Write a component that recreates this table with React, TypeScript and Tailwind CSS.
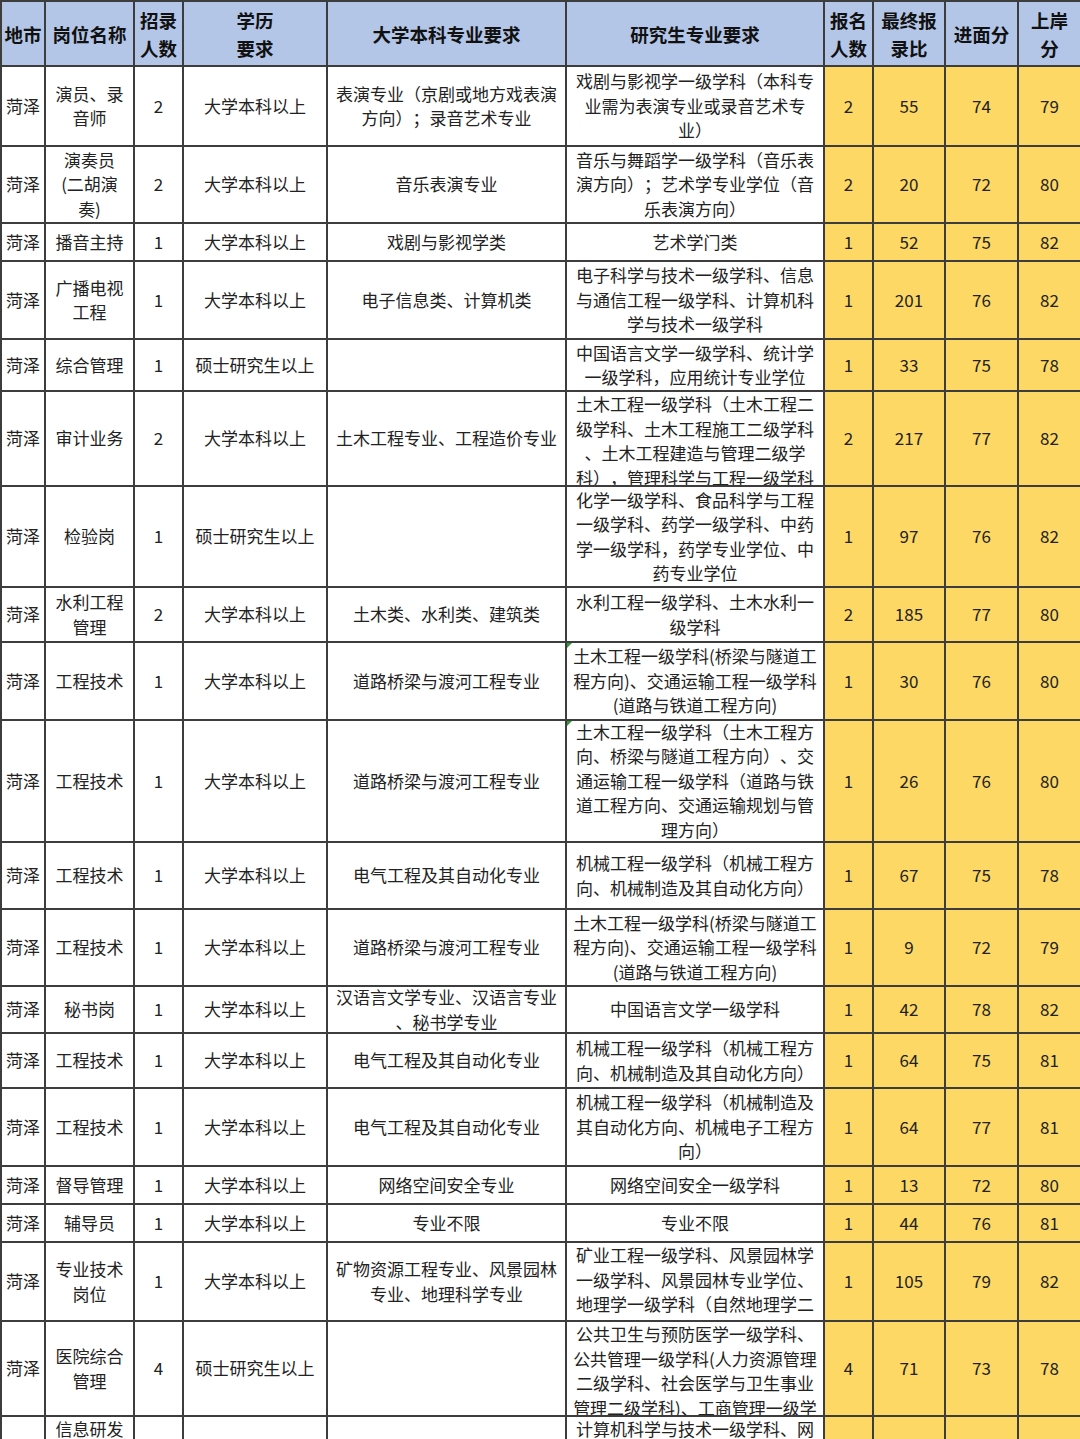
type Row = {
  city: string;
  post: string[];
  num: string;
  edu: string;
  ug: string[];
  pg: string[];
  pgTop?: boolean;
  mark?: boolean;
  stats: string[];
};

const rows: Row[] = [
  {
    city: "菏泽",
    post: ["演员、录", "音师"],
    num: "2",
    edu: "大学本科以上",
    ug: ["表演专业（京剧或地方戏表演", "方向）；录音艺术专业"],
    pg: ["戏剧与影视学一级学科（本科专", "业需为表演专业或录音艺术专", "业）"],
    stats: ["2", "55", "74", "79"],
  },
  {
    city: "菏泽",
    post: ["演奏员", "(二胡演", "奏)"],
    num: "2",
    edu: "大学本科以上",
    ug: ["音乐表演专业"],
    pg: ["音乐与舞蹈学一级学科（音乐表", "演方向）；艺术学专业学位（音", "乐表演方向）"],
    stats: ["2", "20", "72", "80"],
  },
  {
    city: "菏泽",
    post: ["播音主持"],
    num: "1",
    edu: "大学本科以上",
    ug: ["戏剧与影视学类"],
    pg: ["艺术学门类"],
    stats: ["1", "52", "75", "82"],
  },
  {
    city: "菏泽",
    post: ["广播电视", "工程"],
    num: "1",
    edu: "大学本科以上",
    ug: ["电子信息类、计算机类"],
    pg: ["电子科学与技术一级学科、信息", "与通信工程一级学科、计算机科", "学与技术一级学科"],
    stats: ["1", "201", "76", "82"],
  },
  {
    city: "菏泽",
    post: ["综合管理"],
    num: "1",
    edu: "硕士研究生以上",
    ug: [],
    pg: ["中国语言文学一级学科、统计学", "一级学科，应用统计专业学位"],
    stats: ["1", "33", "75", "78"],
  },
  {
    city: "菏泽",
    post: ["审计业务"],
    num: "2",
    edu: "大学本科以上",
    ug: ["土木工程专业、工程造价专业"],
    pg: ["土木工程一级学科（土木工程二", "级学科、土木工程施工二级学科", "、土木工程建造与管理二级学", "科），管理科学与工程一级学科"],
    pgTop: true,
    stats: ["2", "217", "77", "82"],
  },
  {
    city: "菏泽",
    post: ["检验岗"],
    num: "1",
    edu: "硕士研究生以上",
    ug: [],
    pg: ["化学一级学科、食品科学与工程", "一级学科、药学一级学科、中药", "学一级学科，药学专业学位、中", "药专业学位"],
    stats: ["1", "97", "76", "82"],
  },
  {
    city: "菏泽",
    post: ["水利工程", "管理"],
    num: "2",
    edu: "大学本科以上",
    ug: ["土木类、水利类、建筑类"],
    pg: ["水利工程一级学科、土木水利一", "级学科"],
    stats: ["2", "185", "77", "80"],
  },
  {
    city: "菏泽",
    post: ["工程技术"],
    num: "1",
    edu: "大学本科以上",
    ug: ["道路桥梁与渡河工程专业"],
    pg: ["土木工程一级学科(桥梁与隧道工", "程方向)、交通运输工程一级学科", "(道路与铁道工程方向)"],
    mark: true,
    stats: ["1", "30", "76", "80"],
  },
  {
    city: "菏泽",
    post: ["工程技术"],
    num: "1",
    edu: "大学本科以上",
    ug: ["道路桥梁与渡河工程专业"],
    pg: ["土木工程一级学科（土木工程方", "向、桥梁与隧道工程方向）、交", "通运输工程一级学科（道路与铁", "道工程方向、交通运输规划与管", "理方向）"],
    mark: true,
    stats: ["1", "26", "76", "80"],
  },
  {
    city: "菏泽",
    post: ["工程技术"],
    num: "1",
    edu: "大学本科以上",
    ug: ["电气工程及其自动化专业"],
    pg: ["机械工程一级学科（机械工程方", "向、机械制造及其自动化方向）"],
    stats: ["1", "67", "75", "78"],
  },
  {
    city: "菏泽",
    post: ["工程技术"],
    num: "1",
    edu: "大学本科以上",
    ug: ["道路桥梁与渡河工程专业"],
    pg: ["土木工程一级学科(桥梁与隧道工", "程方向)、交通运输工程一级学科", "(道路与铁道工程方向)"],
    stats: ["1", "9", "72", "79"],
  },
  {
    city: "菏泽",
    post: ["秘书岗"],
    num: "1",
    edu: "大学本科以上",
    ug: ["汉语言文学专业、汉语言专业", "、秘书学专业"],
    pg: ["中国语言文学一级学科"],
    stats: ["1", "42", "78", "82"],
  },
  {
    city: "菏泽",
    post: ["工程技术"],
    num: "1",
    edu: "大学本科以上",
    ug: ["电气工程及其自动化专业"],
    pg: ["机械工程一级学科（机械工程方", "向、机械制造及其自动化方向）"],
    stats: ["1", "64", "75", "81"],
  },
  {
    city: "菏泽",
    post: ["工程技术"],
    num: "1",
    edu: "大学本科以上",
    ug: ["电气工程及其自动化专业"],
    pg: ["机械工程一级学科（机械制造及", "其自动化方向、机械电子工程方", "向）"],
    stats: ["1", "64", "77", "81"],
  },
  {
    city: "菏泽",
    post: ["督导管理"],
    num: "1",
    edu: "大学本科以上",
    ug: ["网络空间安全专业"],
    pg: ["网络空间安全一级学科"],
    stats: ["1", "13", "72", "80"],
  },
  {
    city: "菏泽",
    post: ["辅导员"],
    num: "1",
    edu: "大学本科以上",
    ug: ["专业不限"],
    pg: ["专业不限"],
    stats: ["1", "44", "76", "81"],
  },
  {
    city: "菏泽",
    post: ["专业技术", "岗位"],
    num: "1",
    edu: "大学本科以上",
    ug: ["矿物资源工程专业、风景园林", "专业、地理科学专业"],
    pg: ["矿业工程一级学科、风景园林学", "一级学科、风景园林专业学位、", "地理学一级学科（自然地理学二"],
    pgTop: true,
    stats: ["1", "105", "79", "82"],
  },
  {
    city: "菏泽",
    post: ["医院综合", "管理"],
    num: "4",
    edu: "硕士研究生以上",
    ug: [],
    pg: ["公共卫生与预防医学一级学科、", "公共管理一级学科(人力资源管理", "二级学科、社会医学与卫生事业", "管理二级学科)、工商管理一级学"],
    pgTop: true,
    stats: ["4", "71", "73", "78"],
  },
];

function Cell({
  lines,
  yellow,
  top,
  mark,
}: {
  lines: string[];
  yellow?: boolean;
  top?: boolean;
  mark?: boolean;
}) {
  return (
    <div
      className={`relative flex flex-col items-center overflow-hidden text-center ${
        top ? "justify-start" : "justify-center"
      } ${yellow ? "bg-[#fdd865]" : "bg-white"}`}
    >
      {mark && (
        <div className="absolute left-0 top-0 h-0 w-0 border-r-[5px] border-t-[5px] border-r-transparent border-t-[#2f9a3c]" />
      )}
      {lines.map((l, i) => (
        <span key={i} className="block whitespace-nowrap">
          {l}
        </span>
      ))}
    </div>
  );
}

function Head({ lines }: { lines: string[] }) {
  return (
    <div className="flex flex-col items-center justify-center bg-[#b4c6e7] text-center text-[18.5px] font-bold leading-[28px] text-[#111]">
      {lines.map((l, i) => (
        <span key={i} className="block whitespace-nowrap">
          {l}
        </span>
      ))}
    </div>
  );
}

export default function App() {
  return (
    <div className="h-[1439px] w-[1080px] overflow-hidden bg-white font-['Noto_Sans_CJK_SC','Noto_Sans',sans-serif] [text-spacing-trim:space-all]">
      <div className="grid grid-cols-[42px_87px_47px_142px_237px_256px_47px_70px_71px_61px] grid-rows-[63px_78px_75px_36px_76px_50px_93px_99px_53px_76px_120px_65px_75px_45px_53px_76px_36px_36px_77px_93px_90px] gap-[2px] bg-[#3d3d3d] pl-[2px] pt-[2px] text-[17px] leading-[24.5px] text-[#222]">
        <Head lines={["地市"]} />
        <Head lines={["岗位名称"]} />
        <Head lines={["招录", "人数"]} />
        <Head lines={["学历", "要求"]} />
        <Head lines={["大学本科专业要求"]} />
        <Head lines={["研究生专业要求"]} />
        <Head lines={["报名", "人数"]} />
        <Head lines={["最终报", "录比"]} />
        <Head lines={["进面分"]} />
        <Head lines={["上岸", "分"]} />

        {rows.map((r, i) => (
          <div key={i} className="contents">
            <Cell lines={[r.city]} />
            <Cell lines={r.post} />
            <Cell lines={[r.num]} />
            <Cell lines={[r.edu]} />
            <Cell lines={r.ug} />
            <Cell lines={r.pg} top={r.pgTop} mark={r.mark} />
            {r.stats.map((s, j) => (
              <Cell key={j} lines={[s]} yellow />
            ))}
          </div>
        ))}

        {/* last row, cut off by the bottom edge */}
        <Cell lines={[]} />
        <Cell lines={["信息研发"]} top />
        <Cell lines={[]} />
        <Cell lines={[]} />
        <Cell lines={[]} />
        <Cell lines={["计算机科学与技术一级学科、网"]} top />
        <Cell lines={[]} yellow />
        <Cell lines={[]} yellow />
        <Cell lines={[]} yellow />
        <Cell lines={[]} yellow />
      </div>
    </div>
  );
}
